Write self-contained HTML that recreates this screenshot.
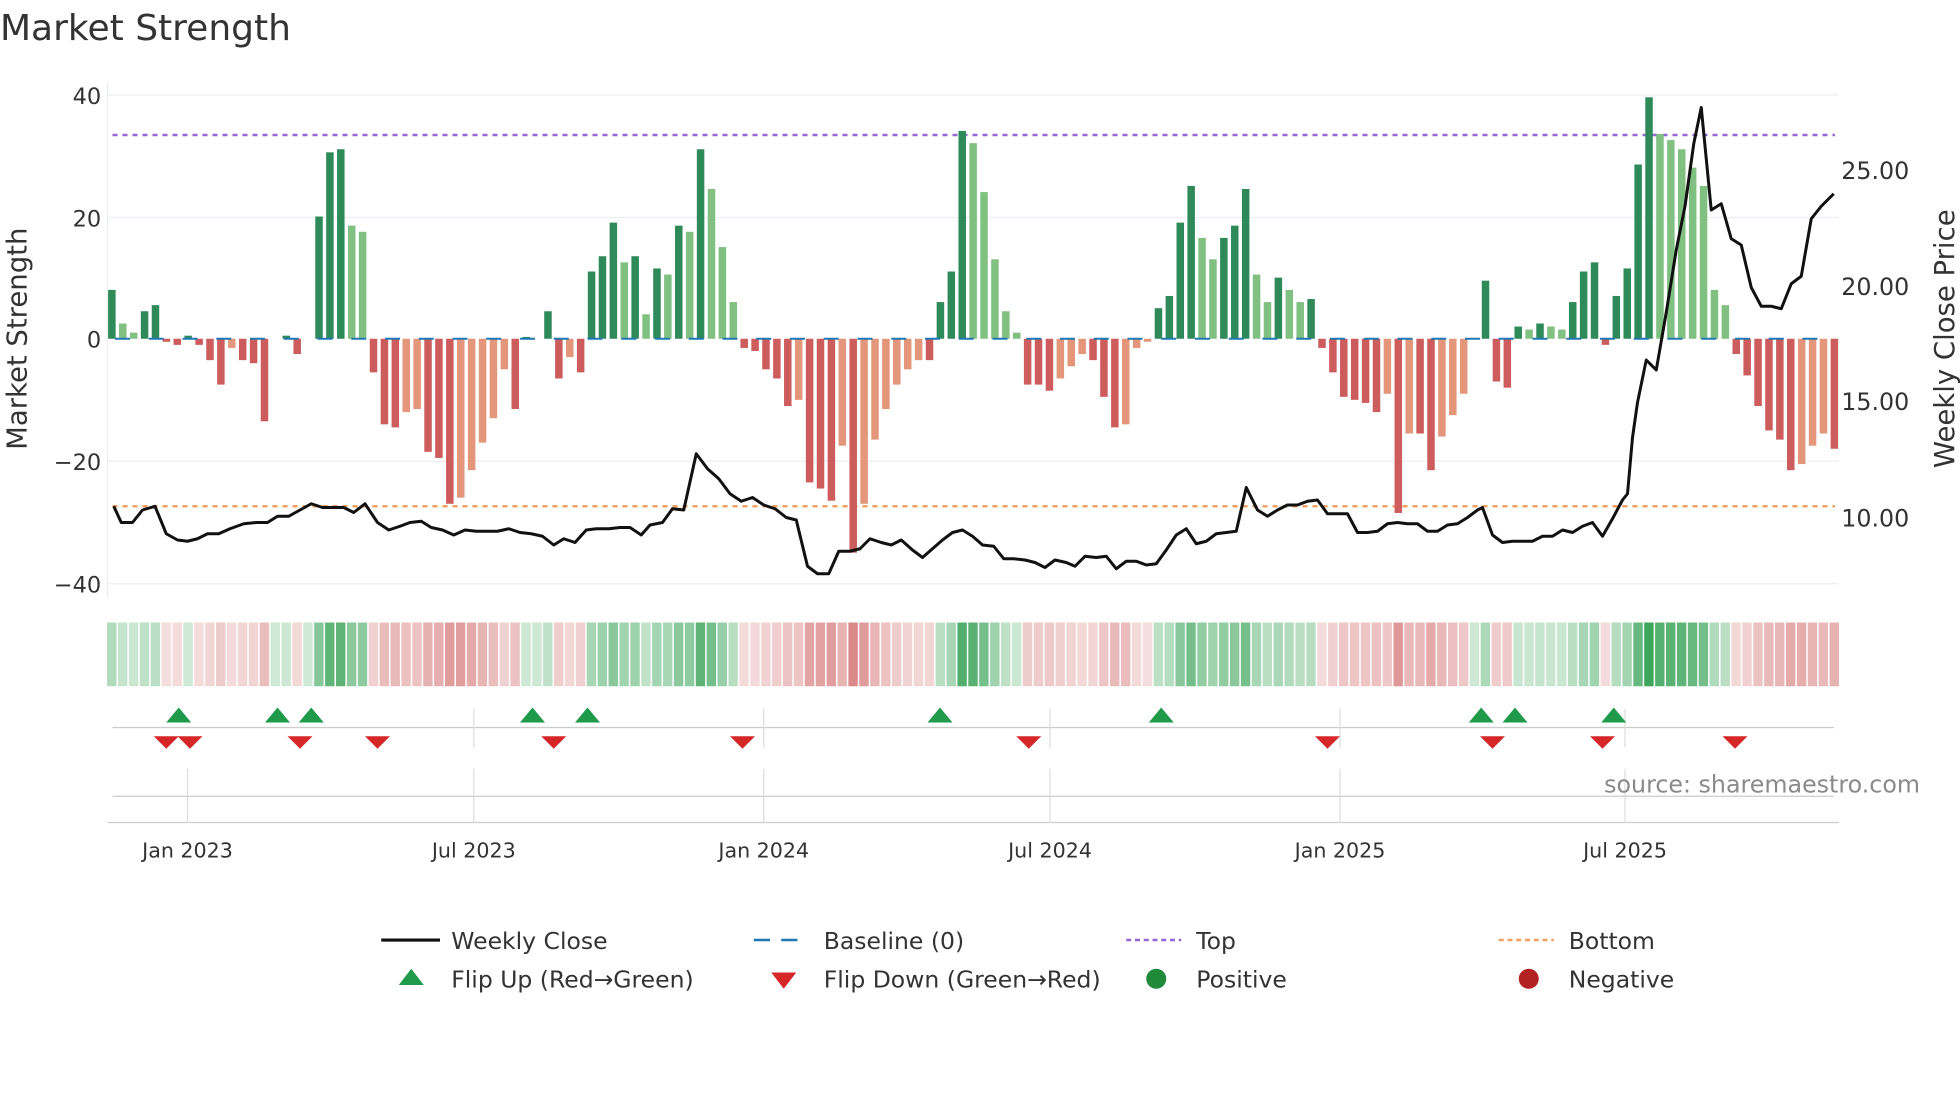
<!DOCTYPE html>
<html><head><meta charset="utf-8"><style>
html,body{margin:0;padding:0;background:#fff;width:1960px;height:1102px;overflow:hidden}
svg{display:block}
text{font-family:"DejaVu Sans","Liberation Sans",sans-serif;fill:#333}
</style></head><body>
<svg id="s" width="1960" height="1102" viewBox="0 0 1568 881.6" xmlns="http://www.w3.org/2000/svg">
<text x="0" y="32" font-size="28.8">Market Strength</text>
<g stroke="#eceef2" stroke-width="1">
<line x1="86" x2="1471" y1="76" y2="76"/><line x1="86" x2="1471" y1="174" y2="174"/>
<line x1="86" x2="1471" y1="369" y2="369"/><line x1="86" x2="1471" y1="467" y2="467"/>
<line x1="86" x2="86" y1="66" y2="478"/>
</g>
<g font-size="18" text-anchor="end">
<text x="81" y="83">40</text><text x="81" y="181">20</text><text x="81" y="278">0</text>
<text x="81" y="376">−20</text><text x="81" y="474">−40</text></g>
<text transform="translate(21,271) rotate(-90)" font-size="22" text-anchor="middle">Market Strength</text>
<g font-size="19"><text x="1473" y="143">25.00</text><text x="1473" y="236">20.00</text><text x="1473" y="328">15.00</text><text x="1473" y="421">10.00</text></g>
<text transform="translate(1563,271) rotate(-90)" font-size="22" text-anchor="middle">Weekly Close Price</text>
<line x1="90" x2="1468" y1="108" y2="108" stroke="#9467d8" stroke-width="2" stroke-dasharray="4,4"/>
<line x1="90" x2="1468" y1="405" y2="405" stroke="#f0a060" stroke-width="2" stroke-dasharray="4,4"/>
<g id="bars"></g>
<g id="heat"></g>
<polyline id="price" fill="none" stroke="#111" stroke-width="2.4" stroke-linejoin="round"/>
<g stroke="#ddd" stroke-width="1">
<line x1="90" x2="1467" y1="582" y2="582" stroke="#ccc"/>
<line x1="90" x2="1467" y1="637" y2="637" stroke="#ccc"/>
<line x1="86" x2="1471" y1="658" y2="658" stroke="#ccc"/>
<line x1="150" x2="150" y1="615" y2="658"/><line x1="379" x2="379" y1="567" y2="598"/><line x1="379" x2="379" y1="615" y2="658"/>
<line x1="611" x2="611" y1="567" y2="598"/><line x1="611" x2="611" y1="615" y2="658"/>
<line x1="840" x2="840" y1="567" y2="598"/><line x1="840" x2="840" y1="615" y2="658"/>
<line x1="1072" x2="1072" y1="567" y2="598"/><line x1="1072" x2="1072" y1="615" y2="658"/>
<line x1="1300" x2="1300" y1="567" y2="598"/><line x1="1300" x2="1300" y1="615" y2="658"/>
</g>
<g id="marks"></g>
<text x="1536" y="634" font-size="19" text-anchor="end" style="fill:#8a8a8a">source: sharemaestro.com</text>
<g font-size="16.5" text-anchor="middle">
<text x="150" y="686">Jan 2023</text><text x="379" y="686">Jul 2023</text><text x="611" y="686">Jan 2024</text>
<text x="840" y="686">Jul 2024</text><text x="1072" y="686">Jan 2025</text><text x="1300" y="686">Jul 2025</text></g>
<g font-size="18.8">
<line x1="305" x2="352" y1="752" y2="752" stroke="#111" stroke-width="2.5"/><text x="361" y="759">Weekly Close</text>
<line x1="603" x2="646" y1="752" y2="752" stroke="#1f77b4" stroke-width="2" stroke-dasharray="13,9"/><text x="659" y="759">Baseline (0)</text>
<line x1="901" x2="945" y1="752" y2="752" stroke="#9467d8" stroke-width="2" stroke-dasharray="4,3"/><text x="957" y="759">Top</text>
<line x1="1199" x2="1243" y1="752" y2="752" stroke="#f0a060" stroke-width="2" stroke-dasharray="4,3"/><text x="1255" y="759">Bottom</text>
<polygon points="319,788 339,788 329,775" fill="#1f9a4a"/><text x="361" y="790">Flip Up (Red→Green)</text>
<polygon points="617,778 637,778 627,791" fill="#d62728"/><text x="659" y="790">Flip Down (Green→Red)</text>
<circle cx="925" cy="783" r="8" fill="#1f8a3a"/><text x="957" y="790">Positive</text>
<circle cx="1223" cy="783" r="8" fill="#b22222"/><text x="1255" y="790">Negative</text>
</g>
</svg>
<script>
var v=[8,2.5,1,4.5,5.5,-0.5,-1,0.5,-1,-3.5,-7.5,-1.5,-3.5,-4,-13.5,0,0.5,-2.5,0,20,30.5,31,18.5,17.5,-5.5,-14,-14.5,-12,-11.5,-18.5,-19.5,-27,-26,-21.5,-17,-13,-5,-11.5,0.3,0,4.5,-6.5,-3,-5.5,11,13.5,19,12.5,13.5,4,11.5,10.5,18.5,17.5,31,24.5,15,6,-1.5,-2,-5,-6.5,-11,-10,-23.5,-24.5,-26.5,-17.5,-35,-27,-16.5,-11.5,-7.5,-5,-3.5,-3.5,6,11,34,32,24,13,4.5,1,-7.5,-7.5,-8.5,-6.5,-4.5,-2.5,-3.5,-9.5,-14.5,-14,-1.5,-0.5,5,7,19,25,16.5,13,16.5,18.5,24.5,10.5,6,10,8,6,6.5,-1.5,-5.5,-9.5,-10,-10.5,-12,-9,-28.5,-15.5,-15.5,-21.5,-16,-12.5,-9,0,9.5,-7,-8,2,1.5,2.5,2,1.5,6,11,12.5,-1,7,11.5,28.5,39.5,33.5,32.5,31,28,25,8,5.5,-2.5,-6,-11,-15,-16.5,-21.5,-20.5,-17.5,-15.5,-18];
var n=v.length,x0=89.5,x1=1467.5,dx=(x1-x0)/(n-1),ns="http://www.w3.org/2000/svg";
function el(t,a,p){var e=document.createElementNS(ns,t);for(var k in a)e.setAttribute(k,a[k]);p.appendChild(e);return e}
var B=document.getElementById('bars'),H=document.getElementById('heat');
for(var i=0;i<n;i++){var x=x0+i*dx,val=v[i],p=i?v[i-1]:0,c;
 if(val>=0)c=(val>=p)?'#2f8a5a':'#80c080';else c=(val<=p)?'#cd5c5c':'#e3967a';
 var h=Math.abs(val)*4.89,y=val>=0?271-h:271;
 if(h>0.5)el('rect',{x:x-3,y:y,width:6,height:h,fill:c},B);
 var a=0.25+Math.min(Math.abs(val),40)/40*0.75;
 var hc=val>=0?'rgba(60,165,90,'+a+')':'rgba(200,80,80,'+(a*0.75)+')';
 el('rect',{x:x-dx/2+0.5,y:498,width:dx-1.2,height:51,fill:hc},H);
}
for(var x=92;x<1468;x+=27)el('line',{x1:x,x2:x+12,y1:271,y2:271,stroke:'#1f77b4','stroke-width':1.6},B);
var pts=[[91,405],[97,418],[106,418],[114,408],[124,405],[133,427],[142,432],[150,433],[158,431],[166,427],[175,427],[184,423],[195,419],[205,418],[214,418],[222,413],[231,413],[240,408],[249,403],[258,406],[267,406],[275,406],[283,410],[292,403],[302,418],[311,424],[320,421],[328,418],[337,417],[345,422],[354,424],[363,428],[372,424],[381,425],[390,425],[398,425],[407,423],[416,426],[425,427],[434,429],[443,436],[451,431],[460,434],[469,424],[477,423],[487,423],[496,422],[504,422],[513,428],[520,420],[530,418],[538,407],[547,408],[557,363],[566,375],[575,383],[584,395],[593,401],[602,398],[611,404],[620,407],[629,414],[637,416],[646,453],[654,459],[663,459],[671,441],[680,441],[688,439],[696,431],[705,434],[713,436],[721,432],[730,440],[738,446],[746,439],[754,432],[762,426],[770,424],[778,429],[786,436],[795,437],[803,447],[811,447],[820,448],[828,450],[836,454],[844,448],[853,450],[860,453],[868,445],[877,446],[885,445],[893,455],[901,449],[909,449],[917,452],[925,451],[933,440],[941,428],[949,423],[957,435],[965,433],[973,427],[981,426],[989,425],[997,390],[1006,408],[1014,413],[1022,408],[1030,404],[1038,404],[1046,401],[1054,400],[1062,411],[1070,411],[1078,411],[1086,426],[1094,426],[1102,425],[1110,419],[1118,418],[1126,419],[1134,419],[1142,425],[1150,425],[1158,420],[1166,419],[1174,414],[1182,408],[1186,406],[1194,428],[1202,434],[1210,433],[1218,433],[1226,433],[1234,429],[1242,429],[1250,424],[1258,426],[1266,421],[1274,418],[1282,429],[1290,415],[1298,400],[1302,395],[1306,350],[1310,322],[1317,288],[1325,296],[1333,250],[1341,200],[1348,165],[1355,115],[1361,86],[1369,168],[1377,163],[1385,191],[1393,196],[1401,230],[1409,245],[1417,245],[1425,247],[1433,227],[1441,221],[1449,175],[1457,165],[1467,155]];
document.getElementById('price').setAttribute('points',pts.map(function(p){return p.join(',')}).join(' '));
var M=document.getElementById('marks');
[143,222,249,426,470,752,929,1185,1212,1291].forEach(function(x){el('polygon',{points:(x-10)+',578 '+(x+10)+',578 '+x+',566',fill:'#1f9a4a'},M)});
[133,152,240,302,443,594,823,1062,1194,1282,1388].forEach(function(x){el('polygon',{points:(x-10)+',589 '+(x+10)+',589 '+x+',599',fill:'#d62728'},M)});
</script>
</body></html>
